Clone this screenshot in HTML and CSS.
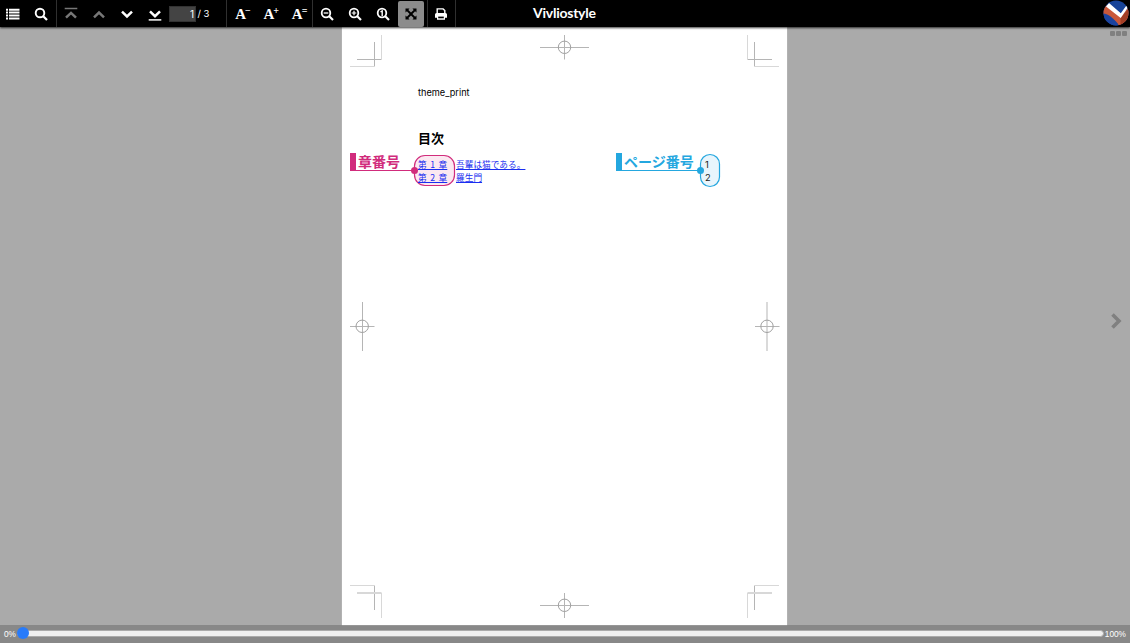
FILE: index.html
```html
<!DOCTYPE html>
<html lang="ja">
<head>
<meta charset="utf-8">
<title>Vivliostyle</title>
<link rel="stylesheet" href="styles.css">
</head>
<body>
<header class="toolbar">
  <div class="group group-find">
    <button class="btn"><svg width="14" height="12" viewBox="0 0 14 12" fill="#fff"><path d="M0 .7h2v2H0zM3 .7h10.500v2H3zM0 3.600h2v2H0zM3 3.600h10.500v2H3zM0 6.500h2v2H0zM3 6.500h10.500v2H3zM0 9.400h2v2H0zM3 9.400h10.500v2H3z"/></svg></button>
    <button class="btn"><svg width="14" height="14" viewBox="0 0 14 14" fill="none" stroke="#fff" stroke-width="1.900"><circle cx="6" cy="6" r="4.300"/><path d="M9 9l4 4" stroke-width="2.300"/></svg></button>
  </div>
  <div class="group group-nav">
    <button class="btn dim"><svg width="14" height="14" viewBox="0 0 14 14" fill="none" stroke="currentColor"><path d="M.7 1.500h12.600" stroke-width="1.500"/><path d="M2 10.700L7 5.900l5 4.800" stroke-width="2.500"/></svg></button>
    <button class="btn dim"><svg width="14" height="14" viewBox="0 0 14 14" fill="none" stroke="currentColor"><path d="M2 10.300L7 5.500l5 4.800" stroke-width="2.500"/></svg></button>
    <button class="btn"><svg width="14" height="14" viewBox="0 0 14 14" fill="none" stroke="currentColor"><path d="M2 4.700L7 9.500l5-4.800" stroke-width="2.500"/></svg></button>
    <button class="btn"><svg width="14" height="14" viewBox="0 0 14 14" fill="none" stroke="currentColor"><path d="M2 4.400L7 9.200l5-4.800" stroke-width="2.500"/><path d="M.7 12.900h12.600" stroke-width="1.500"/></svg></button>
    <span class="page-no">1</span><span class="page-total">/ 3</span>
  </div>
  <div class="group group-text">
    <button class="btn letter">A<sup>−</sup></button>
    <button class="btn letter">A<sup>+</sup></button>
    <button class="btn letter">A<sup>=</sup></button>
  </div>
  <div class="group group-zoom">
    <button class="btn"><svg width="14" height="14" viewBox="0 0 14 14" fill="none" stroke="#fff" stroke-width="1.800"><circle cx="6" cy="6" r="4.300"/><path d="M9 9l4 4" stroke-width="2.200"/><path d="M3.700 6h4.600" stroke-width="1.300"/></svg></button>
    <button class="btn"><svg width="14" height="14" viewBox="0 0 14 14" fill="none" stroke="#fff" stroke-width="1.800"><circle cx="6" cy="6" r="4.300"/><path d="M9 9l4 4" stroke-width="2.200"/><path d="M3.700 6h4.600M6 3.700v4.600" stroke-width="1.200"/></svg></button>
    <button class="btn"><svg width="14" height="14" viewBox="0 0 14 14" fill="none" stroke="#fff" stroke-width="1.800"><circle cx="6" cy="6" r="4.300"/><path d="M9 9l4 4" stroke-width="2.200"/><path d="M4.500 4.800L6.200 3.900v5" stroke-width="1.400"/></svg></button>
    <button class="btn active"><svg width="12" height="12" viewBox="0 0 12 12" fill="#000"><path d="M.5.5h4L3.300 1.900 6 4.600l2.700-2.700L7.500.5h4v4L10.100 3.300 7.400 6l2.700 2.700L11.500 7.500v4h-4l1.200-1.400L6 7.400l-2.700 2.700 1.200 1.400h-4v-4l1.400 1.200L4.600 6 1.900 3.300.5 4.500z"/></svg></button>
  </div>
  <div class="group group-print">
    <button class="btn"><svg width="14" height="14" viewBox="0 0 14 14"><path d="M3.200 6.500V1.900h5.900l1.700 1.700v2.900" fill="none" stroke="#fff" stroke-width="1.400"/><path d="M2.500 5.900h9A1.500 1.500 0 0 1 13 7.400v3.400h-2v1.900H3v-1.900H1V7.400a1.500 1.500 0 0 1 1.500-1.500z" fill="#fff"/><path d="M4.200 9.600h5.600v1.700H4.200z" fill="#000"/></svg></button>
  </div>
  <h1 class="brand">Vivliostyle</h1>
  <svg class="logo" width="26" height="26" viewBox="0 0 26 26">
    <defs><clipPath id="disc"><circle cx="13" cy="13" r="12.500"/></clipPath></defs>
    <g clip-path="url(#disc)">
      <path d="M0 0h26v26H0z" fill="#174398"/>
      <path d="M0 9l4-4 13.500 11.500L26 7v14l-8.500 6L11 20 0 14z" fill="#c9583a"/>
      <path d="M17.500 18L26 8v12l-8.500 5z" fill="#a23e25"/>
      <path d="M3 6.500L6 3l11.800 10.200L24.500 4l1.500 2-8.300 12z" fill="#fff"/>
      <path d="M0 13.500C6 14 10 18 15 24v3H0z" fill="#1b439f"/>
    </g>
  </svg>
</header>
<main class="viewer">
  <article class="page">
    <svg class="marks" width="445" height="598" viewBox="342 27 445 598" fill="none">
      <g stroke="#b5b5b5">
        <path d="M357 59.500h24.500M374.500 42v24.500M772 59.500h-24.500M754.500 42v24.500M374.500 585.500V610M754.500 585.500V610"/>
        <path d="M540 47.500h49M564.500 35v24.500M540 605.500h49M564.500 593v25M362.500 302v49M350 326.500h24.500M767 302v49M755 326.500h24.500"/>
      </g>
      <g stroke="#a0a0a0"><circle cx="564.500" cy="47.300" r="6.200"/><circle cx="564.500" cy="605.300" r="6.200"/><circle cx="362.200" cy="326.300" r="6.200"/><circle cx="767" cy="326.300" r="6.200"/></g>
      <g stroke="#d8d8d8">
        <path d="M381.500 35v24M350 66.500h24M747.500 35v24M779 66.500h-24M350 585.500h24M381.500 593v25M779 585.500h-24M747.500 593v25"/>
        <path d="M357 593h24.500M772 593h-24.500" stroke-width="2"/>
      </g>
    </svg>
    <div class="annotations">
      <svg width="445" height="598" viewBox="342 27 445 598">
        <g fill="#fbe8f1" stroke="#d12c7c" stroke-width="1.200"><rect x="414.500" y="155.500" width="40" height="30" rx="10.500"/><path d="M350 170.500h64"/></g>
        <path d="M350 153h6v18h-6z" fill="#d12c7c"/><circle cx="414.500" cy="170.500" r="3.500" fill="#d12c7c"/>
        <g fill="#e8f5fc" stroke="#24a7df" stroke-width="1.200"><rect x="700.500" y="154.500" width="19" height="32" rx="9.500"/><path d="M616 170.500h84"/></g>
        <path d="M616 153h6v18h-6z" fill="#24a7df"/><circle cx="700.500" cy="170.500" r="3.500" fill="#24a7df"/>
      </svg>
      <span class="note note-chapter">章番号</span>
      <span class="note note-page">ページ番号</span>
    </div>
    <p class="doc-title">theme_print</p>
    <h2 class="toc-title">目次</h2>
    <ol class="toc">
      <li><a class="chapter" href="#c1">第 1 章</a><a href="#c1">吾輩は猫である。</a><span class="num">1</span></li>
      <li><a class="chapter" href="#c2">第 2 章</a><a href="#c2">羅生門</a><span class="num">2</span></li>
    </ol>
  </article>
  <div class="dots"><i></i><i></i><i></i></div>
  <svg class="next" width="12" height="18" viewBox="0 0 12 18"><path d="M2.500 2.500L9 9l-6.500 6.500" fill="none" stroke="#808080" stroke-width="3.600"/></svg>
</main>
<footer class="progress">
  <span class="start">0%</span>
  <div class="track"><div class="thumb"></div></div>
  <span>100%</span>
</footer>
</body>
</html>
```
FILE: styles.css
```css
* { box-sizing: border-box; }
body {
  margin: 0;
  height: 643px;
  display: flex;
  flex-direction: column;
  overflow: hidden;
  background: #aaa;
  font-family: "Liberation Sans", "Noto Sans CJK JP", sans-serif;
}
svg { display: block; flex: none; }
.toolbar {
  position: relative;
  z-index: 2;
  flex: none;
  display: flex;
  height: 27px;
  background: #000;
  color: #fff;
  box-shadow: 0 1px 2px rgba(0, 0, 0, .75);
}
.group {
  display: flex;
  align-items: center;
  gap: 2.300px;
  border-right: 1px solid #303030;
}
.group-find { width: 57px; }
.group-nav { width: 170px; padding-left: .500px; }
.group-text { width: 86px; padding-left: 3px; }
.group-zoom { width: 115px; padding-left: .500px; }
.group-print { width: 28px; }
.btn {
  display: flex;
  align-items: center;
  justify-content: center;
  flex: none;
  width: 26px;
  height: 26px;
  padding: 0;
  border: 0;
  border-radius: 2px;
  background: none;
  color: #fff;
}
.dim { color: #777; }
.active { background: #8c8c8c; }
.letter {
  align-items: flex-start;
  padding-top: 4px;
  font: bold 15px/18px "Liberation Serif", serif;
}
.letter sup { font-size: 10px; line-height: 12px; margin-left: -1px; vertical-align: baseline; }
.page-no {
  width: 27px;
  height: 16px;
  margin-left: -1.500px;
  padding-right: 1px;
  background: #444;
  border: 1px solid #333;
  font: 10px/14px Inter, sans-serif;
  text-align: right;
}
.page-total { margin-left: -1px; font: 9.500px/14px Inter, sans-serif; white-space: nowrap; }
.brand {
  margin: 0 0 0 77px;
  font: bold 14px/26px Lato, sans-serif;
  letter-spacing: -.250px;
}
.logo { margin-left: auto; margin-right: 1px; }
.viewer {
  position: relative;
  flex: 1;
  display: flex;
  justify-content: center;
}
.page {
  position: relative;
  width: 445px;
  margin-right: 1px;
  padding: 60px 61px 0 76px;
  background: #fff;
  box-shadow: 0 0 1px #ddd;
}
.marks, .annotations { position: absolute; left: 0; top: 0; }
.note {
  position: absolute;
  top: 124px;
  white-space: nowrap;
  font: bold 14px/20px "Noto Sans CJK JP", sans-serif;
}
.note-chapter { left: 16px; color: #d12c7c; }
.note-page { left: 282px; color: #24a7df; }
.doc-title { margin: 0; font: 9.200px/12px Inter, sans-serif; }
.toc-title {
  margin: 30px 0 0;
  font: bold 13px/18px "Noto Sans CJK JP", sans-serif;
}
.toc {
  position: relative;
  margin: 12px 0 0;
  padding: 0;
  list-style: none;
  font: 8.700px/12.600px "Noto Sans CJK JP", sans-serif;
}
.toc li { display: flex; height: 12.600px; }
.toc a { color: #1a2ff0; white-space: nowrap; text-underline-offset: 1px; }
.toc .chapter { margin-right: 8px; word-spacing: 1.600px; width: 30px; }
.num { margin-left: auto; width: 21px; color: #222; font: 9.300px/12.600px Inter, sans-serif; }
.dots { position: absolute; right: 3px; top: 4px; display: flex; gap: 1px; }
.dots i { width: 5px; height: 5px; border-radius: 1px; background: #808080; }
.next { position: absolute; right: 8px; top: 285px; }
.progress {
  flex: none;
  display: flex;
  align-items: center;
  height: 18px;
  padding: 0 4px 1px;
  background: #888;
  color: #fff;
  font-size: 8.300px;
}
.start { width: 13px; white-space: nowrap; }
.track {
  position: relative;
  flex: 1;
  height: 7px;
  margin-right: 1px;
  border: 1px solid #aaa;
  border-radius: 4px;
  background: #efefef;
}
.thumb {
  position: absolute;
  left: -1px;
  top: -4px;
  width: 12px;
  height: 12px;
  border-radius: 50%;
  background: #287bfa;
}
```
